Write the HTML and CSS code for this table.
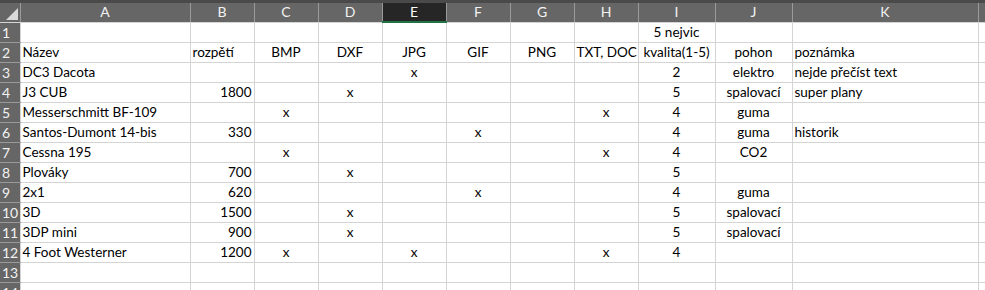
FILE: index.html
```html
<!DOCTYPE html>
<html lang="cs">
<head>
<meta charset="utf-8">
<title>Modely</title>
<link rel="stylesheet" href="styles.css">
</head>
<body>
<div class="sheet">
  <div class="topbar"></div>
  <table class="grid">
    <colgroup>
      <col class="w-rh"><col class="w-a"><col class="w-s"><col class="w-s"><col class="w-s"><col class="w-s"><col class="w-s"><col class="w-s"><col class="w-s"><col class="w-m"><col class="w-m"><col class="w-k"><col class="w-l">
    </colgroup>
    <thead>
      <tr class="colhead">
        <th class="corner"><span class="tri"></span></th>
        <th>A</th><th>B</th><th>C</th><th>D</th><th class="sel">E</th><th>F</th><th>G</th><th>H</th><th>I</th><th>J</th><th>K</th><th></th>
      </tr>
    </thead>
    <tbody>
      <tr><th>1</th><td></td><td></td><td></td><td></td><td></td><td></td><td></td><td></td><td class="c">5 nejvic</td><td></td><td></td><td></td></tr>
      <tr><th>2</th><td>Název</td><td>rozpětí</td><td class="c">BMP</td><td class="c">DXF</td><td class="c">JPG</td><td class="c">GIF</td><td class="c">PNG</td><td class="c">TXT, DOC</td><td class="c">kvalita(1-5)</td><td class="c">pohon</td><td>poznámka</td><td></td></tr>
      <tr><th>3</th><td>DC3 Dacota</td><td></td><td></td><td></td><td class="c">x</td><td></td><td></td><td></td><td class="c">2</td><td class="c">elektro</td><td>nejde přečíst text</td><td></td></tr>
      <tr><th>4</th><td>J3 CUB</td><td class="r">1800</td><td></td><td class="c">x</td><td></td><td></td><td></td><td></td><td class="c">5</td><td class="c">spalovací</td><td>super plany</td><td></td></tr>
      <tr><th>5</th><td>Messerschmitt BF-109</td><td></td><td class="c">x</td><td></td><td></td><td></td><td></td><td class="c">x</td><td class="c">4</td><td class="c">guma</td><td></td><td></td></tr>
      <tr><th>6</th><td>Santos-Dumont 14-bis</td><td class="r">330</td><td></td><td></td><td></td><td class="c">x</td><td></td><td></td><td class="c">4</td><td class="c">guma</td><td>historik</td><td></td></tr>
      <tr><th>7</th><td>Cessna 195</td><td></td><td class="c">x</td><td></td><td></td><td></td><td></td><td class="c">x</td><td class="c">4</td><td class="c">CO2</td><td></td><td></td></tr>
      <tr><th>8</th><td>Plováky</td><td class="r">700</td><td></td><td class="c">x</td><td></td><td></td><td></td><td></td><td class="c">5</td><td></td><td></td><td></td></tr>
      <tr><th>9</th><td>2x1</td><td class="r">620</td><td></td><td></td><td></td><td class="c">x</td><td></td><td></td><td class="c">4</td><td class="c">guma</td><td></td><td></td></tr>
      <tr><th>10</th><td>3D</td><td class="r">1500</td><td></td><td class="c">x</td><td></td><td></td><td></td><td></td><td class="c">5</td><td class="c">spalovací</td><td></td><td></td></tr>
      <tr><th>11</th><td>3DP mini</td><td class="r">900</td><td></td><td class="c">x</td><td></td><td></td><td></td><td></td><td class="c">5</td><td class="c">spalovací</td><td></td><td></td></tr>
      <tr><th>12</th><td>4 Foot Westerner</td><td class="r">1200</td><td class="c">x</td><td></td><td class="c">x</td><td></td><td></td><td class="c">x</td><td class="c">4</td><td></td><td></td><td></td></tr>
      <tr><th>13</th><td></td><td></td><td></td><td></td><td></td><td></td><td></td><td></td><td></td><td></td><td></td><td></td></tr>
      <tr class="partial"><th>14</th><td></td><td></td><td></td><td></td><td></td><td></td><td></td><td></td><td></td><td></td><td></td><td></td></tr>
    </tbody>
  </table>
</div>
</body>
</html>
```

FILE: styles.css
```css
html, body {
  margin: 0;
  padding: 0;
  background: #ffffff;
}

.sheet {
  width: 985px;
  height: 290px;
  overflow: hidden;
  font-family: Lato, "Open Sans", sans-serif;
}

.topbar {
  height: 3px;
  background: #4a4a4a;
}

.grid {
  border-collapse: collapse;
  table-layout: fixed;
  width: 1040px;
}

.w-rh { width: 20px; }
.w-a  { width: 170px; }
.w-s  { width: 64px; }
.w-m  { width: 77px; }
.w-k  { width: 186px; }
.w-l  { width: 64px; }

/* column letters */
.colhead th {
  height: 18px;
  padding: 0;
  background: #666666;
  color: #f2f2f2;
  font-weight: normal;
  font-size: 14px;
  text-align: center;
  border-left: 1px solid #9a9a9a;
  border-right: 1px solid #9a9a9a;
  border-bottom: 1px solid #d4d4d4;
  line-height: 18px;
}

.colhead th.sel {
  background: #262626;
  color: #ffffff;
  border-bottom: 2px solid #217346;
}

.colhead th.corner {
  position: relative;
  border-left: none;
}

.corner .tri {
  position: absolute;
  right: 2px;
  bottom: 2px;
  width: 0;
  height: 0;
  border-style: solid;
  border-width: 0 0 12px 12px;
  border-color: transparent transparent #d9d9d9 transparent;
}

/* row numbers */
tbody th {
  height: 19px;
  padding: 0 0 0 2px;
  background: #666666;
  color: #f2f2f2;
  font-weight: normal;
  font-size: 14px;
  text-align: left;
  border-top: 1px solid #9a9a9a;
  border-bottom: 1px solid #9a9a9a;
  border-right: 1px solid #d4d4d4;
  line-height: 19px;
  overflow: hidden;
  white-space: nowrap;
}

tbody td {
  height: 19px;
  padding: 0 2px;
  border: 1px solid #d4d4d4;
  font-size: 13.5px;
  color: #000000;
  line-height: 19px;
  white-space: nowrap;
  overflow: visible;
  vertical-align: bottom;
}

td.c { text-align: center; }
td.r { text-align: right; }
```
